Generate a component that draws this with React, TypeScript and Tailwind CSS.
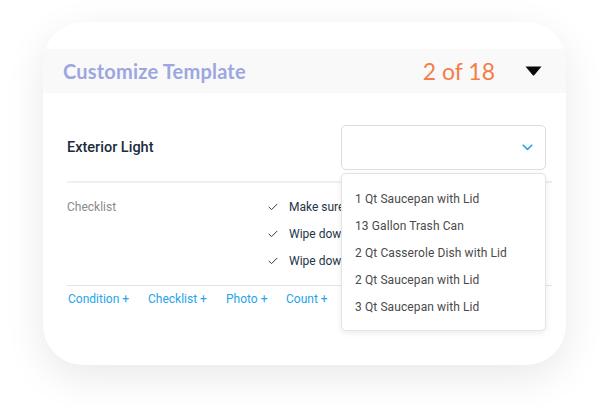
import React from "react";

const checklist = [
  "Make sure the light is working",
  "Wipe down the light fixture",
  "Wipe down the light switch",
];

const options = [
  "1 Qt Saucepan with Lid",
  "13 Gallon Trash Can",
  "2 Qt Casserole Dish with Lid",
  "2 Qt Saucepan with Lid",
  "3 Qt Saucepan with Lid",
];

const actions = [
  { label: "Condition +", w: "w-[80px]" },
  { label: "Checklist +", w: "w-[78px]" },
  { label: "Photo +", w: "w-[60px]" },
  { label: "Count +", w: "w-[60px]" },
];

function CheckIcon() {
  return (
    <svg width="10" height="8" viewBox="0 0 10 8" fill="none">
      <path d="M1 4.2L3.6 6.6L9 1.2" stroke="#2d3b4e" strokeWidth="1" strokeLinecap="round" strokeLinejoin="round" />
    </svg>
  );
}

function Chevron() {
  return (
    <svg width="11" height="7" viewBox="0 0 11 7" fill="none">
      <path d="M1.2 1.2L5.5 5.4L9.8 1.2" stroke="#2aa3e6" strokeWidth="1.6" strokeLinecap="round" strokeLinejoin="round" />
    </svg>
  );
}

export default function App() {
  return (
    <div className="w-[608px] h-[406px] bg-white pt-[22px] pl-[43px] font-['Roboto','Liberation_Sans',sans-serif]">
      <div className="w-[523px] h-[343px] rounded-[40px] bg-white shadow-[0_12px_40px_rgba(0,0,0,0.09)] pt-[27px]">
        {/* header band */}
        <div className="h-[44px] bg-[#f9f9fa] flex items-center pl-[20px] pr-[24px]">
          <span className="font-['Lato',sans-serif] font-bold text-[20px] text-[#9ca7df] tracking-[0.2px]">
            Customize Template
          </span>
          <span className="ml-auto font-['Lato',sans-serif] text-[23px] text-[#f57d49]">2 of 18</span>
          <svg className="ml-[30px]" width="17" height="10" viewBox="0 0 17 10">
            <path d="M0.5 0.5H16.5L9.2 9.2Q8.5 9.9 7.8 9.2Z" fill="#0a0a0a" />
          </svg>
        </div>

        <div className="pl-[24px] pr-[14px]">
          {/* item row */}
          <div className="relative mt-[32px] h-[45px] flex items-center">
            <span className="text-[14.5px] font-medium text-[#1e2b3b]">Exterior Light</span>
            <div className="ml-auto mr-[6px] w-[205px] h-[45px] rounded-[5px] border border-[#dcdcdc] flex items-center justify-end pr-[12px]">
              <Chevron />
            </div>
            {/* dropdown menu */}
            <div className="absolute top-[48px] right-[6px] z-10 w-[205px] h-[158px] rounded-[5px] border border-[#e4e4e4] bg-white shadow-[0_2px_6px_rgba(0,0,0,0.08)] pt-[11px]">
              {options.map((o) => (
                <div key={o} className="h-[27px] flex items-center pl-[13px] text-[12px] text-[#4a4a4a] tracking-[0.1px]">
                  {o}
                </div>
              ))}
            </div>
          </div>

          <div className="mt-[11px] h-[2px] bg-[#efefef]" />

          {/* checklist */}
          <div className="flex pt-[15px] pb-[15px]">
            <span className="w-[201px] text-[12px] text-[#8a8a8a] leading-[18px]">Checklist</span>
            <div className="flex flex-col gap-[9px]">
              {checklist.map((c) => (
                <div key={c} className="flex items-center h-[18px] whitespace-nowrap">
                  <CheckIcon />
                  <span className="ml-[11px] text-[12px] text-[#243447]">{c}</span>
                </div>
              ))}
            </div>
          </div>

          <div className="h-px bg-[#e3e3e3]" />

          <div className="flex pt-[5px] pl-[1px]">
            {actions.map((a) => (
              <span key={a.label} className={`${a.w} text-[12px] text-[#25a4ea] leading-[16px]`}>
                {a.label}
              </span>
            ))}
          </div>
        </div>
      </div>
    </div>
  );
}
